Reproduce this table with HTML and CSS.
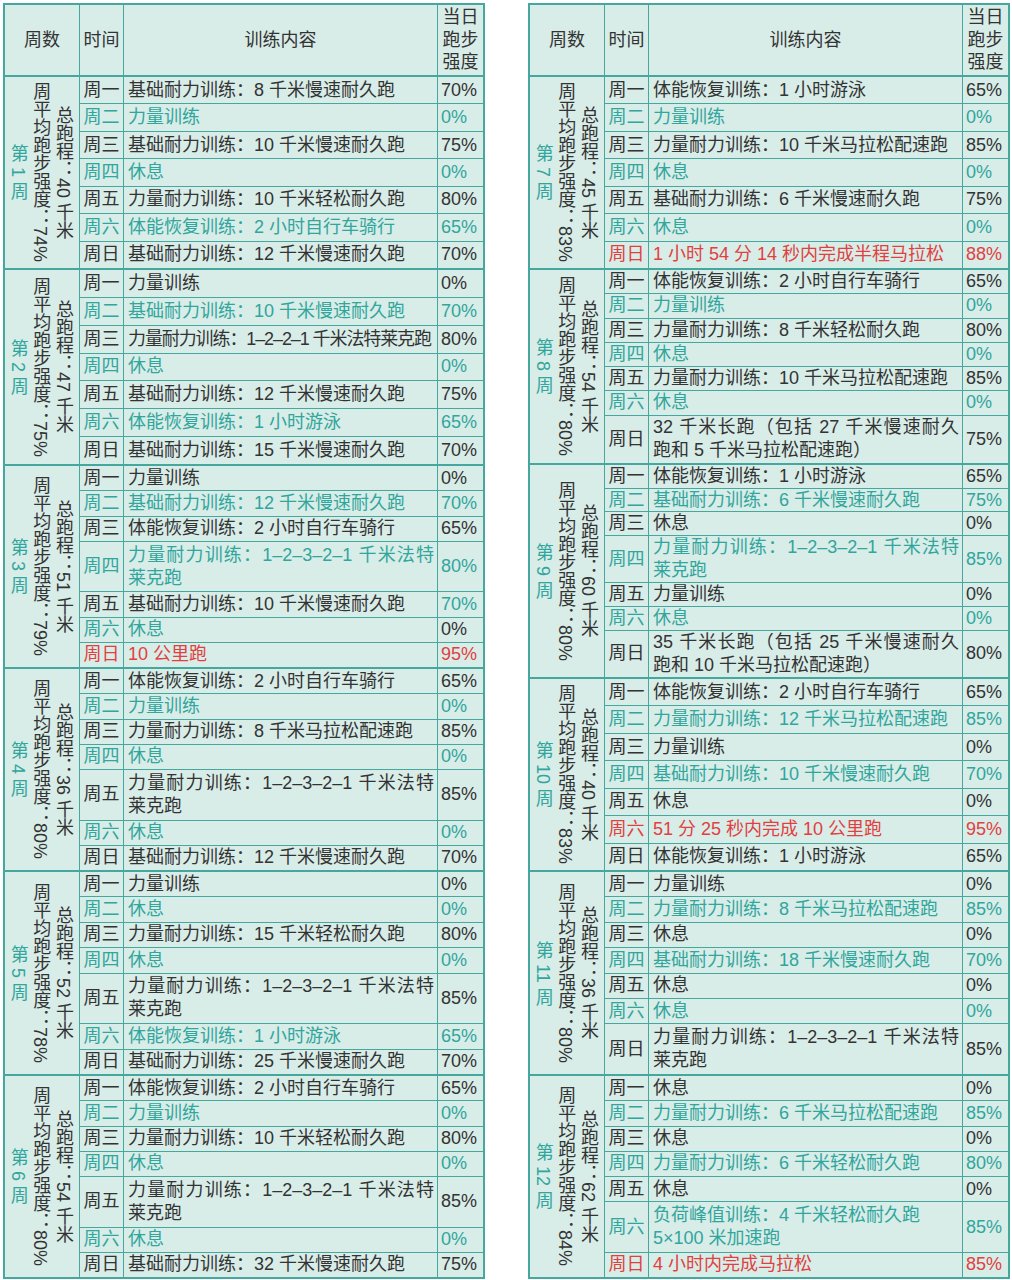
FILE: index.html
```html
<!DOCTYPE html>
<html lang="zh-CN">
<head>
<meta charset="utf-8">
<title>训练计划</title>
<link rel="stylesheet" href="styles.css">
</head>
<body>
<div class="page">
  <div class="tbl">
    <div class="head">
      <div class="hc">周数</div><div class="hc">时间</div><div class="hc">训练内容</div><div class="hc">当日<br>跑步<br>强度</div>
    </div>
    <div class="wk u7 s191">
      <div class="wc"><span class="wn">第 1 周</span><span class="vt">周平均跑步强度：74%</span><span class="vt">总跑程：40 千米</span></div>
      <div class="row"><div class="d">周一</div><div class="c">基础耐力训练：8 千米慢速耐久跑</div><div class="p">70%</div></div>
      <div class="row t"><div class="d">周二</div><div class="c">力量训练</div><div class="p">0%</div></div>
      <div class="row"><div class="d">周三</div><div class="c">基础耐力训练：10 千米慢速耐久跑</div><div class="p">75%</div></div>
      <div class="row t"><div class="d">周四</div><div class="c">休息</div><div class="p">0%</div></div>
      <div class="row"><div class="d">周五</div><div class="c">力量耐力训练：10 千米轻松耐久跑</div><div class="p">80%</div></div>
      <div class="row t"><div class="d">周六</div><div class="c">体能恢复训练：2 小时自行车骑行</div><div class="p">65%</div></div>
      <div class="row"><div class="d">周日</div><div class="c">基础耐力训练：12 千米慢速耐久跑</div><div class="p">70%</div></div>
    </div>
    <div class="wk u7 s194">
      <div class="wc"><span class="wn">第 2 周</span><span class="vt">周平均跑步强度：75%</span><span class="vt">总跑程：47 千米</span></div>
      <div class="row"><div class="d">周一</div><div class="c">力量训练</div><div class="p">0%</div></div>
      <div class="row t"><div class="d">周二</div><div class="c">基础耐力训练：10 千米慢速耐久跑</div><div class="p">70%</div></div>
      <div class="row"><div class="d">周三</div><div class="c tight">力量耐力训练：1–2–2–1 千米法特莱克跑</div><div class="p">80%</div></div>
      <div class="row t"><div class="d">周四</div><div class="c">休息</div><div class="p">0%</div></div>
      <div class="row"><div class="d">周五</div><div class="c">基础耐力训练：12 千米慢速耐久跑</div><div class="p">75%</div></div>
      <div class="row t"><div class="d">周六</div><div class="c">体能恢复训练：1 小时游泳</div><div class="p">65%</div></div>
      <div class="row"><div class="d">周日</div><div class="c">基础耐力训练：15 千米慢速耐久跑</div><div class="p">70%</div></div>
    </div>
    <div class="wk u8 s201">
      <div class="wc"><span class="wn">第 3 周</span><span class="vt">周平均跑步强度：79%</span><span class="vt">总跑程：51 千米</span></div>
      <div class="row"><div class="d">周一</div><div class="c">力量训练</div><div class="p">0%</div></div>
      <div class="row t"><div class="d">周二</div><div class="c">基础耐力训练：12 千米慢速耐久跑</div><div class="p">70%</div></div>
      <div class="row"><div class="d">周三</div><div class="c">体能恢复训练：2 小时自行车骑行</div><div class="p">65%</div></div>
      <div class="row t x2"><div class="d">周四</div><div class="c"><span class="l1">力量耐力训练：1–2–3–2–1 千米法特</span>莱克跑</div><div class="p">80%</div></div>
      <div class="row"><div class="d">周五</div><div class="c">基础耐力训练：10 千米慢速耐久跑</div><div class="p pt">70%</div></div>
      <div class="row t"><div class="d">周六</div><div class="c">休息</div><div class="p pk">0%</div></div>
      <div class="row r"><div class="d">周日</div><div class="c">10 公里跑</div><div class="p">95%</div></div>
    </div>
    <div class="wk u8 s201">
      <div class="wc"><span class="wn">第 4 周</span><span class="vt">周平均跑步强度：80%</span><span class="vt">总跑程：36 千米</span></div>
      <div class="row"><div class="d">周一</div><div class="c">体能恢复训练：2 小时自行车骑行</div><div class="p">65%</div></div>
      <div class="row t"><div class="d">周二</div><div class="c">力量训练</div><div class="p">0%</div></div>
      <div class="row"><div class="d">周三</div><div class="c">力量耐力训练：8 千米马拉松配速跑</div><div class="p">85%</div></div>
      <div class="row t"><div class="d">周四</div><div class="c">休息</div><div class="p">0%</div></div>
      <div class="row x2"><div class="d">周五</div><div class="c"><span class="l1">力量耐力训练：1–2–3–2–1 千米法特</span>莱克跑</div><div class="p">85%</div></div>
      <div class="row t"><div class="d">周六</div><div class="c">休息</div><div class="p">0%</div></div>
      <div class="row"><div class="d">周日</div><div class="c">基础耐力训练：12 千米慢速耐久跑</div><div class="p">70%</div></div>
    </div>
    <div class="wk u8 s202">
      <div class="wc"><span class="wn">第 5 周</span><span class="vt">周平均跑步强度：78%</span><span class="vt">总跑程：52 千米</span></div>
      <div class="row"><div class="d">周一</div><div class="c">力量训练</div><div class="p">0%</div></div>
      <div class="row t"><div class="d">周二</div><div class="c">休息</div><div class="p">0%</div></div>
      <div class="row"><div class="d">周三</div><div class="c">力量耐力训练：15 千米轻松耐久跑</div><div class="p">80%</div></div>
      <div class="row t"><div class="d">周四</div><div class="c">休息</div><div class="p">0%</div></div>
      <div class="row x2"><div class="d">周五</div><div class="c"><span class="l1">力量耐力训练：1–2–3–2–1 千米法特</span>莱克跑</div><div class="p">85%</div></div>
      <div class="row t"><div class="d">周六</div><div class="c">体能恢复训练：1 小时游泳</div><div class="p">65%</div></div>
      <div class="row"><div class="d">周日</div><div class="c">基础耐力训练：25 千米慢速耐久跑</div><div class="p">70%</div></div>
    </div>
    <div class="wk u8 s201">
      <div class="wc"><span class="wn">第 6 周</span><span class="vt">周平均跑步强度：80%</span><span class="vt">总跑程：54 千米</span></div>
      <div class="row"><div class="d">周一</div><div class="c">体能恢复训练：2 小时自行车骑行</div><div class="p">65%</div></div>
      <div class="row t"><div class="d">周二</div><div class="c">力量训练</div><div class="p">0%</div></div>
      <div class="row"><div class="d">周三</div><div class="c">力量耐力训练：10 千米轻松耐久跑</div><div class="p">80%</div></div>
      <div class="row t"><div class="d">周四</div><div class="c">休息</div><div class="p">0%</div></div>
      <div class="row x2"><div class="d">周五</div><div class="c"><span class="l1">力量耐力训练：1–2–3–2–1 千米法特</span>莱克跑</div><div class="p">85%</div></div>
      <div class="row t"><div class="d">周六</div><div class="c">休息</div><div class="p">0%</div></div>
      <div class="row"><div class="d">周日</div><div class="c">基础耐力训练：32 千米慢速耐久跑</div><div class="p">75%</div></div>
    </div>
  </div>

  <div class="tbl">
    <div class="head">
      <div class="hc">周数</div><div class="hc">时间</div><div class="hc">训练内容</div><div class="hc">当日<br>跑步<br>强度</div>
    </div>
    <div class="wk u7 s191">
      <div class="wc"><span class="wn">第 7 周</span><span class="vt">周平均跑步强度：83%</span><span class="vt">总跑程：45 千米</span></div>
      <div class="row"><div class="d">周一</div><div class="c">体能恢复训练：1 小时游泳</div><div class="p">65%</div></div>
      <div class="row t"><div class="d">周二</div><div class="c">力量训练</div><div class="p">0%</div></div>
      <div class="row"><div class="d">周三</div><div class="c">力量耐力训练：10 千米马拉松配速跑</div><div class="p">85%</div></div>
      <div class="row t"><div class="d">周四</div><div class="c">休息</div><div class="p">0%</div></div>
      <div class="row"><div class="d">周五</div><div class="c">基础耐力训练：6 千米慢速耐久跑</div><div class="p">75%</div></div>
      <div class="row t"><div class="d">周六</div><div class="c">休息</div><div class="p">0%</div></div>
      <div class="row r"><div class="d">周日</div><div class="c">1 小时 54 分 14 秒内完成半程马拉松</div><div class="p">88%</div></div>
    </div>
    <div class="wk u8 s193">
      <div class="wc"><span class="wn">第 8 周</span><span class="vt">周平均跑步强度：80%</span><span class="vt">总跑程：54 千米</span></div>
      <div class="row"><div class="d">周一</div><div class="c">体能恢复训练：2 小时自行车骑行</div><div class="p">65%</div></div>
      <div class="row t"><div class="d">周二</div><div class="c">力量训练</div><div class="p">0%</div></div>
      <div class="row"><div class="d">周三</div><div class="c">力量耐力训练：8 千米轻松耐久跑</div><div class="p">80%</div></div>
      <div class="row t"><div class="d">周四</div><div class="c">休息</div><div class="p">0%</div></div>
      <div class="row"><div class="d">周五</div><div class="c">力量耐力训练：10 千米马拉松配速跑</div><div class="p">85%</div></div>
      <div class="row t"><div class="d">周六</div><div class="c">休息</div><div class="p">0%</div></div>
      <div class="row x2"><div class="d">周日</div><div class="c"><span class="l1">32 千米长跑（包括 27 千米慢速耐久</span>跑和 5 千米马拉松配速跑）</div><div class="p">75%</div></div>
    </div>
    <div class="wk u9 s212">
      <div class="wc"><span class="wn">第 9 周</span><span class="vt">周平均跑步强度：80%</span><span class="vt">总跑程：60 千米</span></div>
      <div class="row"><div class="d">周一</div><div class="c">体能恢复训练：1 小时游泳</div><div class="p">65%</div></div>
      <div class="row t"><div class="d">周二</div><div class="c">基础耐力训练：6 千米慢速耐久跑</div><div class="p">75%</div></div>
      <div class="row"><div class="d">周三</div><div class="c">休息</div><div class="p">0%</div></div>
      <div class="row t x2"><div class="d">周四</div><div class="c"><span class="l1">力量耐力训练：1–2–3–2–1 千米法特</span>莱克跑</div><div class="p">85%</div></div>
      <div class="row"><div class="d">周五</div><div class="c">力量训练</div><div class="p">0%</div></div>
      <div class="row t"><div class="d">周六</div><div class="c">休息</div><div class="p">0%</div></div>
      <div class="row x2"><div class="d">周日</div><div class="c"><span class="l1">35 千米长跑（包括 25 千米慢速耐久</span>跑和 10 千米马拉松配速跑）</div><div class="p">80%</div></div>
    </div>
    <div class="wk u7 s191">
      <div class="wc"><span class="wn">第 10 周</span><span class="vt">周平均跑步强度：83%</span><span class="vt">总跑程：40 千米</span></div>
      <div class="row"><div class="d">周一</div><div class="c">体能恢复训练：2 小时自行车骑行</div><div class="p">65%</div></div>
      <div class="row t"><div class="d">周二</div><div class="c">力量耐力训练：12 千米马拉松配速跑</div><div class="p">85%</div></div>
      <div class="row"><div class="d">周三</div><div class="c">力量训练</div><div class="p">0%</div></div>
      <div class="row t"><div class="d">周四</div><div class="c">基础耐力训练：10 千米慢速耐久跑</div><div class="p">70%</div></div>
      <div class="row"><div class="d">周五</div><div class="c">休息</div><div class="p">0%</div></div>
      <div class="row r"><div class="d">周六</div><div class="c">51 分 25 秒内完成 10 公里跑</div><div class="p">95%</div></div>
      <div class="row"><div class="d">周日</div><div class="c">体能恢复训练：1 小时游泳</div><div class="p">65%</div></div>
    </div>
    <div class="wk u8 s202">
      <div class="wc"><span class="wn">第 11 周</span><span class="vt">周平均跑步强度：80%</span><span class="vt">总跑程：36 千米</span></div>
      <div class="row"><div class="d">周一</div><div class="c">力量训练</div><div class="p">0%</div></div>
      <div class="row t"><div class="d">周二</div><div class="c">力量耐力训练：8 千米马拉松配速跑</div><div class="p">85%</div></div>
      <div class="row"><div class="d">周三</div><div class="c">休息</div><div class="p">0%</div></div>
      <div class="row t"><div class="d">周四</div><div class="c">基础耐力训练：18 千米慢速耐久跑</div><div class="p">70%</div></div>
      <div class="row"><div class="d">周五</div><div class="c">休息</div><div class="p">0%</div></div>
      <div class="row t"><div class="d">周六</div><div class="c">休息</div><div class="p">0%</div></div>
      <div class="row x2"><div class="d">周日</div><div class="c"><span class="l1">力量耐力训练：1–2–3–2–1 千米法特</span>莱克跑</div><div class="p">85%</div></div>
    </div>
    <div class="wk u8 s201">
      <div class="wc"><span class="wn">第 12 周</span><span class="vt">周平均跑步强度：84%</span><span class="vt">总跑程：62 千米</span></div>
      <div class="row"><div class="d">周一</div><div class="c">休息</div><div class="p">0%</div></div>
      <div class="row t"><div class="d">周二</div><div class="c">力量耐力训练：6 千米马拉松配速跑</div><div class="p">85%</div></div>
      <div class="row"><div class="d">周三</div><div class="c">休息</div><div class="p">0%</div></div>
      <div class="row t"><div class="d">周四</div><div class="c">力量耐力训练：6 千米轻松耐久跑</div><div class="p">80%</div></div>
      <div class="row"><div class="d">周五</div><div class="c">休息</div><div class="p">0%</div></div>
      <div class="row t x2"><div class="d">周六</div><div class="c">负荷峰值训练：4 千米轻松耐久跑<br>5×100 米加速跑</div><div class="p">85%</div></div>
      <div class="row r"><div class="d">周日</div><div class="c">4 小时内完成马拉松</div><div class="p">85%</div></div>
    </div>
  </div>
</div>
</body>
</html>
```
FILE: styles.css
```css
html, body {
  margin: 0;
  padding: 0;
  background: #ffffff;
}
body {
  font-family: "Liberation Sans", "Noto Sans CJK SC", sans-serif;
  font-size: 18px;
  color: #333333;
}
.page {
  display: flex;
  gap: 43px;
  padding: 3px 0 0 3px;
}
.tbl {
  width: 482px;
  box-sizing: border-box;
  border: 2px solid #45a79e;
  background: #45a79e;
  display: flex;
  flex-direction: column;
  gap: 2px;
}
.head, .wk {
  display: grid;
  grid-template-columns: 74px 43px 313px 1fr;
  gap: 1px;
}
.head {
  height: 70px;
}
.hc {
  background: #d8ece8;
  display: flex;
  align-items: center;
  justify-content: center;
  text-align: center;
  line-height: 22.5px;
}
.u7 { grid-template-rows: repeat(7, minmax(0, 1fr)); }
.u8 { grid-template-rows: repeat(8, minmax(0, 1fr)); }
.u9 { grid-template-rows: repeat(9, minmax(0, 1fr)); }
.s191 { height: 191px; }
.s193 { height: 193px; }
.s194 { height: 194px; }
.s201 { height: 201px; }
.s202 { height: 202px; }
.s212 { height: 212px; }
.wc {
  grid-column: 1;
  grid-row: 1 / -1;
  background: #d8ece8;
  display: flex;
  justify-content: center;
  align-items: center;
  gap: 1px;
  padding-right: 5px;
  overflow: hidden;
}
.wc span {
  writing-mode: vertical-rl;
  white-space: nowrap;
  line-height: 1.2;
}
.wn {
  color: #30a69c;
}
.row {
  display: contents;
}
.d, .c, .p {
  background: #d8ece8;
  display: flex;
  align-items: center;
  line-height: 23px;
  white-space: nowrap;
  overflow: visible;
}
.d {
  justify-content: center;
}
.c {
  padding: 0 3px 0 4px;
  display: block;
  align-content: center;
  text-align: justify;
  white-space: normal;
}
.tight {
  letter-spacing: -1.1px;
  white-space: nowrap;
}
.l1 {
  display: block;
  text-align: justify;
  text-align-last: justify;
}
.p {
  padding-left: 3px;
}
.row.t > * { color: #30a69c; }
.row.r > * { color: #e1403f; }
.row.x2 > * { grid-row: span 2; }
.row > .pt { color: #30a69c; }
.row > .pk { color: #333333; }
```
